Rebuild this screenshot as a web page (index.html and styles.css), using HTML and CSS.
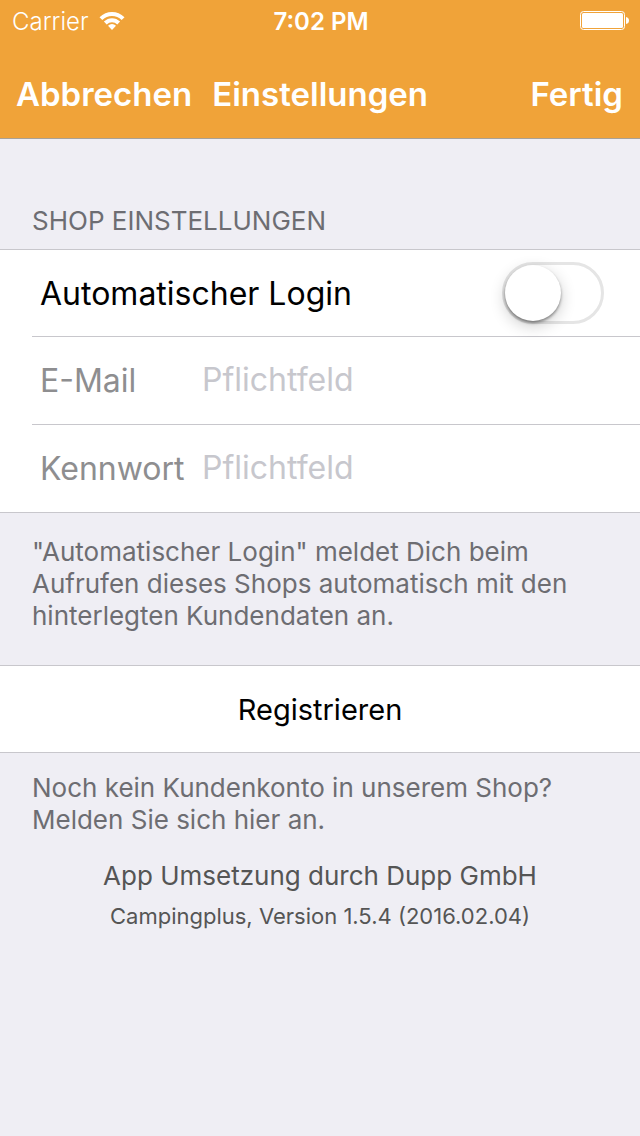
FILE: index.html
```html
<!DOCTYPE html>
<html lang="de">
<head>
<meta charset="utf-8">
<meta name="viewport" content="width=device-width, initial-scale=1">
<title>Einstellungen</title>
<link rel="stylesheet" href="styles.css">
</head>
<body>
<header class="top">
  <div class="status">
    <div class="carrier">
      <span>Carrier</span>
      <svg class="wifi" viewBox="0 0 26 20" aria-hidden="true">
        <path d="M0.500 6.200Q6 1 13 1T25.500 6.200L22.700 9Q18.500 5 13 5T3.300 9Z"/>
        <path d="M4.900 10.600Q8.500 7.200 13 7.200T21.100 10.600L18.300 13.400Q16 11.200 13 11.200T7.700 13.400Z"/>
        <path d="M9 14.800Q10.800 13.100 13 13.100T17 14.800L13 18.900Z"/>
      </svg>
    </div>
    <time class="clock">7:02 PM</time>
    <svg class="battery" viewBox="0 0 50 20" aria-hidden="true">
      <rect x="0.500" y="0.500" width="44" height="18" rx="3" fill="none" stroke="#fff"/>
      <rect x="2" y="2" width="41" height="15" rx="1.500"/>
      <path d="M46 6Q49 6.500 49 9.500T46 13Z"/>
    </svg>
  </div>
  <nav class="nav">
    <button class="nav-button" type="button">Abbrechen</button>
    <h1 class="title">Einstellungen</h1>
    <button class="nav-button" type="button">Fertig</button>
  </nav>
</header>
<main>
  <form>
    <h2 class="section-title">SHOP EINSTELLUNGEN</h2>
    <div class="group">
      <div class="row">
        <label class="row-label" for="auto">Automatischer Login</label>
        <input class="switch" id="auto" type="checkbox" role="switch">
      </div>
      <div class="row">
        <label class="field-label" for="mail">E-Mail</label>
        <input class="text" id="mail" type="email" placeholder="Pflichtfeld">
      </div>
      <div class="row">
        <label class="field-label" for="pass">Kennwort</label>
        <input class="text" id="pass" type="password" placeholder="Pflichtfeld">
      </div>
    </div>
    <p class="note">"Automatischer Login" meldet Dich beim Aufrufen dieses Shops automatisch mit den hinterlegten Kundendaten an.</p>
    <button class="register" type="button">Registrieren</button>
    <p class="note register-note">Noch kein Kundenkonto in unserem Shop? Melden Sie sich hier an.</p>
  </form>
  <footer class="about">
    <p class="maker">App Umsetzung durch Dupp GmbH</p>
    <p class="version">Campingplus, Version 1.5.4 (2016.02.04)</p>
  </footer>
</main>
</body>
</html>
```
FILE: styles.css
```css
* { box-sizing: border-box; }
body { margin: 0; min-height: 100vh; background: #efeef4; color: #000; font-family: Inter, Roboto, sans-serif; }
h1, h2, p { margin: 0; font-weight: 400; }
button, input { font: inherit; }
.top { background: #f0a339; color: #fff; border-bottom: 1px solid #a9a196; }
.status { display: grid; grid-template-columns: 1fr auto 1fr; align-items: center; height: 42px; padding: 0 10px 0 12px; font-size: 24px; }
.carrier { display: flex; align-items: center; gap: 10px; font-weight: 300; }
.wifi { width: 26px; height: 20px; fill: #fff; }
.clock { font-size: 24px; font-weight: 600; }
.battery { width: 50px; height: 20px; fill: #fff; justify-self: end; }
.nav { display: flex; align-items: center; height: 96px; padding: 8px 17px 0 16px; gap: 20px; }
.nav-button, .title { padding: 0; border: 0; background: none; color: inherit; font-size: 33px; font-weight: 600; }
.title { flex: 1; }
.section-title { padding: 65px 32px 12px; font-size: 26px; line-height: 33px; color: #6d6d72; }
.group { padding-left: 32px; background: #fff; border: solid #c8c7cc; border-width: 1px 0; }
.row { display: flex; align-items: center; justify-content: space-between; height: 86px; padding: 0 36px 0 8px; }
.row + .row { height: 88px; border-top: 1px solid #c8c7cc; }
.row-label, .field-label, .text { font-size: 32px; }
.field-label { width: 162px; flex: none; color: #8e8e90; }
.text { flex: 1; min-width: 0; padding: 0 0 2px; border: 0; outline: 0; background: none; }
.text::placeholder { color: #c7c7cd; opacity: 1; }
.switch { appearance: none; display: flex; flex: none; width: 102px; height: 62px; margin: 0; padding: 0; border: 3px solid #e5e5e5; border-radius: 31px; background: #fff; }
.switch::before { content: ""; width: 56px; height: 56px; border-radius: 50%; background: #fff; box-shadow: 0 2px 3px #0006, 0 5px 16px #0003; }
.switch:checked { justify-content: flex-end; background: #4cd964; border-color: #4cd964; }
.note { padding: 23px 32px 33px; font-size: 26px; line-height: 32px; color: #6d6d72; }
.register { display: block; width: 100%; height: 88px; padding: 0; border: solid #c8c7cc; border-width: 1px 0; background: #fff; color: #000; font-size: 29px; }
.register-note { padding: 19px 80px 0 32px; }
.about { padding: 24px 32px; text-align: center; color: #555; }
.maker { font-size: 26px; line-height: 32px; }
.version { padding-top: 9px; font-size: 22px; line-height: 30px; }
```
